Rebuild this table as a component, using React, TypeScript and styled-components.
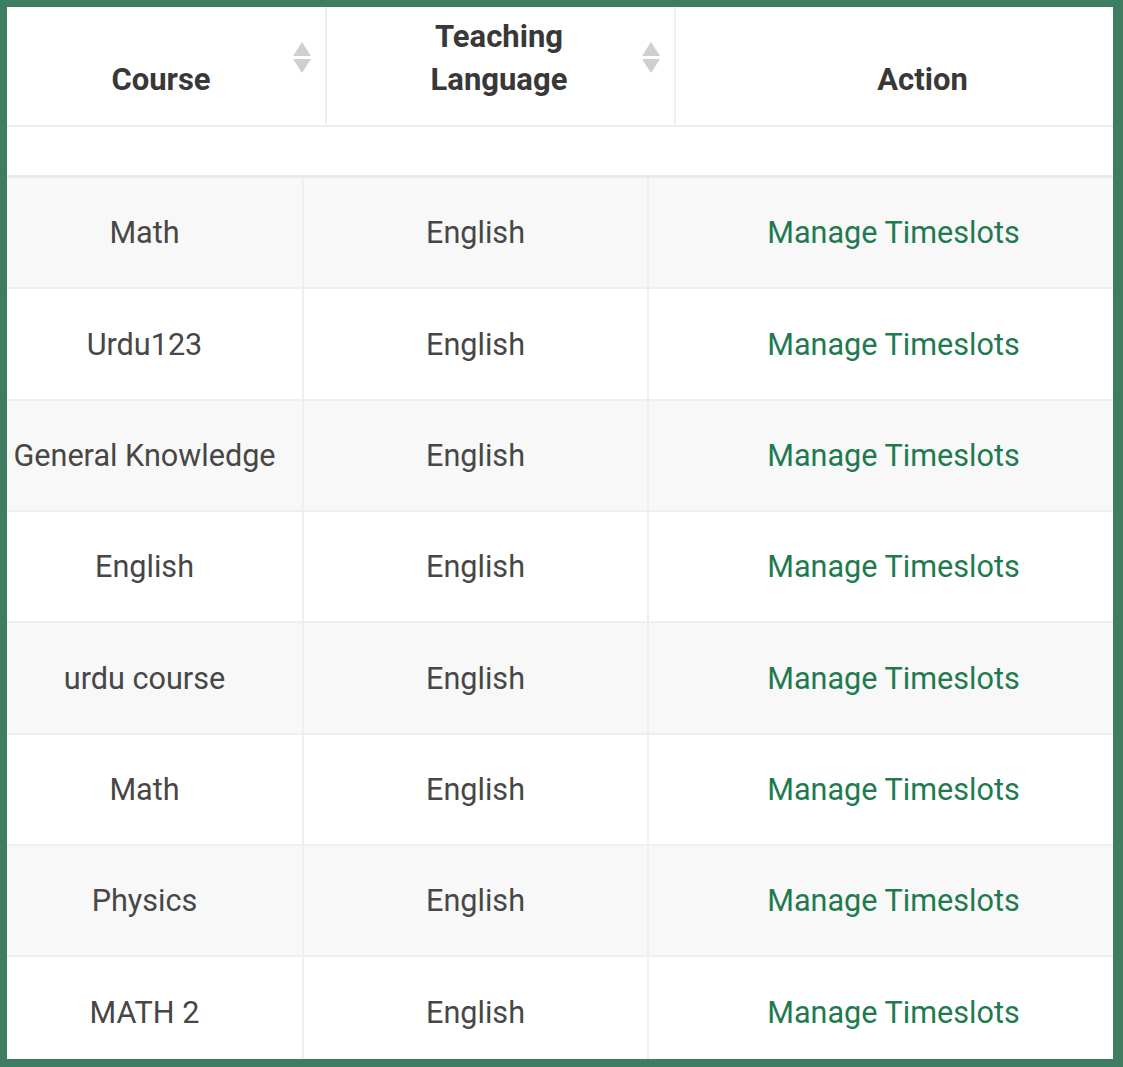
import React from "react";
import styled, { createGlobalStyle } from "styled-components";

const Global = createGlobalStyle`
  html, body { margin: 0; padding: 0; background: #3e7d62; }
  body { font-family: Roboto, "Noto Sans", "Liberation Sans", sans-serif; }
`;

const Frame = styled.div`
  box-sizing: border-box;
  width: 1123px;
  height: 1067px;
  padding: 7px 10px 8px 7px;
  background: #3e7d62;
`;

const Panel = styled.div`
  width: 100%;
  height: 100%;
  background: #fff;
  overflow: hidden;
`;

const HeadRow = styled.div`
  display: grid;
  grid-template-columns: 320px 349px 1fr;
  height: 118px;
  border-bottom: 2px solid #ececec;
`;

const HeadCell = styled.div<{ $padL: number; $last?: boolean }>`
  box-sizing: border-box;
  display: flex;
  align-items: stretch;
  padding: 7px ${(p) => (p.$last ? 0 : 14)}px 24px ${(p) => p.$padL}px;
  border-right: ${(p) => (p.$last ? "none" : "2px solid #efefef")};
`;

const HeadTitle = styled.div`
  flex: 1;
  display: flex;
  align-items: flex-end;
  justify-content: center;
  text-align: center;
  font-size: 31px;
  line-height: 43px;
  font-weight: 700;
  color: #383838;
`;

const Sorter = styled.div`
  align-self: center;
  width: 18px;
  margin-left: 4px;
  display: flex;
  flex-direction: column;
  align-items: center;
  gap: 3px;
`;

const Spacer = styled.div`
  height: 48px;
  border-bottom: 3px solid #e9e9e9;
`;

const BodyRow = styled.div<{ $striped: boolean }>`
  display: grid;
  grid-template-columns: 297px 345px 1fr;
  height: 109.35px;
  border-bottom: 2px solid #efefef;
  background: ${(p) => (p.$striped ? "#f8f8f8" : "#ffffff")};
`;

const Cell = styled.div<{ $padL?: number; $padR?: number; $last?: boolean }>`
  box-sizing: border-box;
  display: flex;
  align-items: center;
  justify-content: center;
  padding: 0 ${(p) => p.$padR ?? 0}px 0 ${(p) => p.$padL ?? 0}px;
  border-right: ${(p) => (p.$last ? "none" : "2px solid #efefef")};
  font-size: 30.6px;
  color: #474747;
  white-space: nowrap;
`;

const Link = styled.a`
  color: #1f7a50;
  text-decoration: none;
  cursor: pointer;
`;

const SortIcon = () => (
  <Sorter>
    <svg width="18" height="14" viewBox="0 0 18 14">
      <path d="M9 0 L18 14 L0 14 Z" fill="#cfcfcf" />
    </svg>
    <svg width="18" height="14" viewBox="0 0 18 14">
      <path d="M0 0 L18 0 L9 14 Z" fill="#cfcfcf" />
    </svg>
  </Sorter>
);

const rows = [
  "Math",
  "Urdu123",
  "General Knowledge",
  "English",
  "urdu course",
  "Math",
  "Physics",
  "MATH 2",
];

export default function App() {
  return (
    <>
      <Global />
      <Frame>
        <Panel>
          <HeadRow>
            <HeadCell $padL={26}>
              <HeadTitle>Course</HeadTitle>
              <SortIcon />
            </HeadCell>
            <HeadCell $padL={33}>
              <HeadTitle>
                Teaching
                <br />
                Language
              </HeadTitle>
              <SortIcon />
            </HeadCell>
            <HeadCell $padL={56} $last>
              <HeadTitle>Action</HeadTitle>
            </HeadCell>
          </HeadRow>
          <Spacer />
          {rows.map((name, i) => (
            <BodyRow key={i} $striped={i % 2 === 0}>
              <Cell $padR={20}>{name}</Cell>
              <Cell>English</Cell>
              <Cell $padL={25} $last>
                <Link>Manage Timeslots</Link>
              </Cell>
            </BodyRow>
          ))}
        </Panel>
      </Frame>
    </>
  );
}
